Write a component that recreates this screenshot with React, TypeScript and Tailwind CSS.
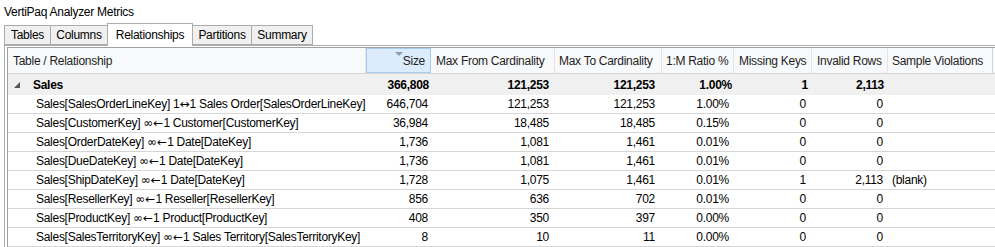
const cols = "grid grid-cols-[358px_65px_124px_107px_72px_78px_76px_105px_1fr]";

type Rel = { from: string; sym: string; to: string; v: string[] };

const rows: Rel[] = [
  { from: "Sales[SalesOrderLineKey]", sym: "1↔1", to: "Sales Order[SalesOrderLineKey]", v: ["646,704", "121,253", "121,253", "1.00%", "0", "0", ""] },
  { from: "Sales[CustomerKey]", sym: "∞←1", to: "Customer[CustomerKey]", v: ["36,984", "18,485", "18,485", "0.15%", "0", "0", ""] },
  { from: "Sales[OrderDateKey]", sym: "∞←1", to: "Date[DateKey]", v: ["1,736", "1,081", "1,461", "0.01%", "0", "0", ""] },
  { from: "Sales[DueDateKey]", sym: "∞←1", to: "Date[DateKey]", v: ["1,736", "1,081", "1,461", "0.01%", "0", "0", ""] },
  { from: "Sales[ShipDateKey]", sym: "∞←1", to: "Date[DateKey]", v: ["1,728", "1,075", "1,461", "0.01%", "1", "2,113", "(blank)"] },
  { from: "Sales[ResellerKey]", sym: "∞←1", to: "Reseller[ResellerKey]", v: ["856", "636", "702", "0.01%", "0", "0", ""] },
  { from: "Sales[ProductKey]", sym: "∞←1", to: "Product[ProductKey]", v: ["408", "350", "397", "0.00%", "0", "0", ""] },
  { from: "Sales[SalesTerritoryKey]", sym: "∞←1", to: "Sales Territory[SalesTerritoryKey]", v: ["8", "10", "11", "0.00%", "0", "0", ""] },
];

const tabs = ["Tables", "Columns", "Relationships", "Partitions", "Summary"];

const Sym = ({ s }: { s: string }) => (
  <span className="inline-flex items-baseline mx-[3px]">
    <span className={s[0] === "∞" ? "font-['DejaVu_Sans'] text-[12px] tracking-normal" : ""}>{s[0]}</span>
    <span className="font-['DejaVu_Sans'] text-[12px] tracking-normal">{s[1]}</span>
    <span>{s[2]}</span>
  </span>
);

export default function App() {
  return (
    <div className="w-[995px] h-[247px] overflow-hidden bg-white text-[12px] tracking-[-0.28px] text-black font-['Liberation_Sans',Arial,sans-serif]">
      <div className="h-[22px] pl-[4px] pt-[4px] leading-[16px]">VertiPaq Analyzer Metrics</div>

      {/* tabs */}
      <div className="flex items-end h-[23px] pl-[4px] relative z-10">
        {tabs.map((t) =>
          t === "Relationships" ? (
            <div
              key={t}
              className="h-[23px] -mb-px w-[86px] flex items-center justify-center bg-white border border-b-0 border-[#acacac] -mx-px"
            >
              {t}
            </div>
          ) : (
            <div
              key={t}
              className={`h-[20px] flex items-center justify-center bg-[#f0f0f0] border border-[#acacac] ${
                t === "Tables" ? "w-[47px]" : t === "Columns" ? "w-[57px] border-l-0" : t === "Partitions" ? "w-[60px]" : "w-[61px] border-l-0"
              }`}
            >
              {t}
            </div>
          )
        )}
      </div>

      {/* panel */}
      <div className="ml-[4px] border-t border-l border-[#acacac] pl-[2px] pt-[1px] h-[203px]">
        <div className="border-t border-l border-[#a0a0a0] h-full flex flex-col">
          {/* header */}
          <div className={`${cols} h-[26px] bg-[#f8f9fa] border-b border-[#d5d5d5] text-[#1e1e1e] shrink-0`}>
            <div className="flex items-center pl-[5px] border-r border-[#e4e4e4]">Table / Relationship</div>
            <div className="relative flex items-center justify-end pr-[5px] bg-[#dcecfc] border border-[#a8cdee]">
              <svg className="absolute top-[3px] left-[28px]" width="8" height="4" viewBox="0 0 8 4">
                <polygon points="0,0 8,0 4,4" fill="#8a9db0" />
              </svg>
              Size
            </div>
            <div className="flex items-center pl-[5px] border-r border-[#e4e4e4]">Max From Cardinality</div>
            <div className="flex items-center pl-[4px] border-r border-[#e4e4e4]">Max To Cardinality</div>
            <div className="flex items-center pl-[4px] border-r border-[#e4e4e4]">1:M Ratio %</div>
            <div className="flex items-center pl-[5px] border-r border-[#e4e4e4]">Missing Keys</div>
            <div className="flex items-center pl-[5px] border-r border-[#e4e4e4]">Invalid Rows</div>
            <div className="flex items-center pl-[4px] border-r border-[#d5d5d5]">Sample Violations</div>
            <div />
          </div>

          {/* group row */}
          <div className={`${cols} h-[21px] bg-[#f0f0f0] font-bold items-center shrink-0`}>
            <div className="flex items-center pl-[6px]">
              <svg width="6" height="6" viewBox="0 0 6 6" className="mr-[13px]">
                <polygon points="6,0 6,6 0,6" fill="#595959" />
              </svg>
              Sales
            </div>
            <div className="text-right pr-[2px]">366,808</div>
            <div className="text-right pr-[6px]">121,253</div>
            <div className="text-right pr-[7px]">121,253</div>
            <div className="text-right pr-[2px]">1.00%</div>
            <div className="text-right pr-[4px]">1</div>
            <div className="text-right pr-[4px]">2,113</div>
            <div />
            <div />
          </div>

          {rows.map((r) => (
            <div key={r.from + r.to} className={`${cols} h-[19px] border-b border-[#d6d6d6] items-center shrink-0`}>
              <div className="pl-[28px] whitespace-nowrap">
                {r.from}
                <Sym s={r.sym} />
                {r.to}
              </div>
              <div className="text-right pr-[3px]">{r.v[0]}</div>
              <div className="text-right pr-[6px]">{r.v[1]}</div>
              <div className="text-right pr-[7px]">{r.v[2]}</div>
              <div className="text-right pr-[5px]">{r.v[3]}</div>
              <div className="text-right pr-[6px]">{r.v[4]}</div>
              <div className="text-right pr-[5px]">{r.v[5]}</div>
              <div className="pl-[4px]">{r.v[6]}</div>
              <div />
            </div>
          ))}
          <div className="flex-1 bg-[#f0f0f0]" />
        </div>
      </div>
    </div>
  );
}
